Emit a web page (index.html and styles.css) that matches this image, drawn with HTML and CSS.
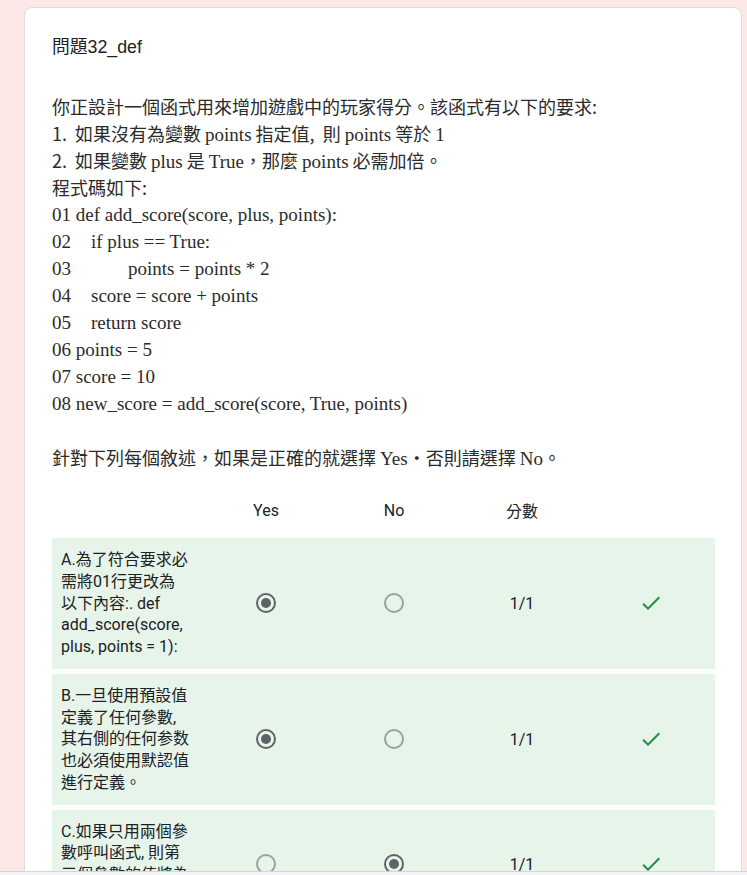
FILE: index.html
```html
<!DOCTYPE html>
<html lang="zh-Hant">
<head>
<meta charset="utf-8">
<title>問題32_def</title>
<link rel="stylesheet" href="styles.css">
</head>
<body>
<div class="page">
  <div class="card">
    <div class="title">問題32_def</div>
    <div class="prompt">
      <div class="pl">你正設計一個函式用來增加遊戲中的玩家得分。該函式有以下的要求:</div>
      <div class="pl">1.&nbsp; 如果沒有為變數 <span class="s">points</span> 指定值,&nbsp; 則 <span class="s">points</span> 等於 <span class="s">1</span></div>
      <div class="pl">2.&nbsp; 如果變數 <span class="s">plus</span> 是 <span class="s">True</span>，那麼 <span class="s">points</span> 必需加倍。</div>
      <div class="pl">程式碼如下:</div>
      <div class="pl s">01 def add_score(score, plus, points):</div>
      <div class="pl s"><span class="ln">02</span><span class="in1">if plus == True:</span></div>
      <div class="pl s"><span class="ln">03</span><span class="in2">points = points * 2</span></div>
      <div class="pl s"><span class="ln">04</span><span class="in1">score = score + points</span></div>
      <div class="pl s"><span class="ln">05</span><span class="in1">return score</span></div>
      <div class="pl s">06 points = 5</div>
      <div class="pl s">07 score = 10</div>
      <div class="pl s">08 new_score = add_score(score, True, points)</div>
      <div class="pl blank"></div>
      <div class="pl">針對下列每個敘述，如果是正確的就選擇 <span class="s">Yes</span>‧否則請選擇 <span class="s">No</span>。</div>
    </div>

    <div class="grid">
      <div class="head">
        <div class="cell"></div>
        <div class="cell">Yes</div>
        <div class="cell">No</div>
        <div class="cell">分數</div>
        <div class="cell"></div>
      </div>

      <div class="row">
        <div class="label">A.為了符合要求必<br>需將01行更改為<br>以下內容:. def<br>add_score(score,<br>plus, points = 1):</div>
        <div class="cell"><span class="radio on"></span></div>
        <div class="cell"><span class="radio"></span></div>
        <div class="cell score">1/1</div>
        <div class="cell"><svg class="check" viewBox="0 0 24 24" width="24" height="24"><path d="M9 16.17L4.83 12l-1.42 1.41L9 19 21 7l-1.41-1.41z" fill="#1e8e3e"/></svg></div>
      </div>

      <div class="row">
        <div class="label">B.一旦使用預設值<br>定義了任何參數,<br>其右側的任何参数<br>也必須使用默認值<br>進行定義。</div>
        <div class="cell"><span class="radio on"></span></div>
        <div class="cell"><span class="radio"></span></div>
        <div class="cell score">1/1</div>
        <div class="cell"><svg class="check" viewBox="0 0 24 24" width="24" height="24"><path d="M9 16.17L4.83 12l-1.42 1.41L9 19 21 7l-1.41-1.41z" fill="#1e8e3e"/></svg></div>
      </div>

      <div class="row">
        <div class="label">C.如果只用兩個參<br>數呼叫函式, 則第<br>三個參數的值將為<br>None。</div>
        <div class="cell"><span class="radio"></span></div>
        <div class="cell"><span class="radio on"></span></div>
        <div class="cell score">1/1</div>
        <div class="cell"><svg class="check" viewBox="0 0 24 24" width="24" height="24"><path d="M9 16.17L4.83 12l-1.42 1.41L9 19 21 7l-1.41-1.41z" fill="#1e8e3e"/></svg></div>
      </div>

      <div class="row">
        <div class="label">D.第03行也會修改<br>在第06行宣告的<br>變數 points 的值。</div>
        <div class="cell"><span class="radio"></span></div>
        <div class="cell"><span class="radio on"></span></div>
        <div class="cell score">1/1</div>
        <div class="cell"><svg class="check" viewBox="0 0 24 24" width="24" height="24"><path d="M9 16.17L4.83 12l-1.42 1.41L9 19 21 7l-1.41-1.41z" fill="#1e8e3e"/></svg></div>
      </div>
    </div>
  </div>
</div>
<div class="bottombar"></div>
</body>
</html>
```

FILE: styles.css
```css
html, body {
  margin: 0;
  padding: 0;
}
body {
  background: #fce8e6;
  font-family: Roboto, "Noto Sans CJK TC", Arial, sans-serif;
  color: #202124;
}
.page {
  padding: 7px 4px 40px 24px;
}
.card {
  width: 718px;
  box-sizing: border-box;
  background: #fff;
  border: 1px solid #dadce0;
  border-radius: 8px;
  padding: 27px 26px 24px 27px;
}
.title {
  font-family: "Liberation Sans", Arial, "Noto Sans CJK TC", sans-serif;
  font-size: 17.8px;
  line-height: 24px;
  color: #202124;
}
.prompt {
  margin-top: 34px;
  font-family: "Noto Sans CJK TC", sans-serif;
  font-size: 18px;
  color: #2b2b2b;
}
.pl {
  height: 27px;
  line-height: 27px;
  white-space: nowrap;
}
.s {
  font-family: "Liberation Serif", "DejaVu Serif", "Noto Sans CJK TC", serif;
  font-size: 19px;
}
.ln {
  display: inline-block;
  width: 39px;
}
.in2 {
  padding-left: 37px;
}
.grid {
  margin-top: 19px;
  display: flex;
  flex-direction: column;
  gap: 5px;
}
.head, .row {
  display: grid;
  grid-template-columns: 150px 128px 128px 128px 130px;
  align-items: center;
}
.head {
  height: 40px;
  font-size: 16px;
  margin-bottom: 3px;
}
.row {
  background: #e6f4ea;
}
.cell {
  text-align: center;
  display: flex;
  justify-content: center;
  align-items: center;
}
.label {
  font-size: 16px;
  line-height: 21.75px;
  padding: 11px 0 11px 9px;
  text-align: left;
  white-space: nowrap;
}
.score {
  font-size: 16px;
}
.radio {
  width: 20px;
  height: 20px;
  box-sizing: border-box;
  border-radius: 50%;
  border: 2px solid #9aa0a6;
  display: flex;
  align-items: center;
  justify-content: center;
}
.radio.on {
  border-color: #5f6368;
}
.radio.on::after {
  content: "";
  width: 10px;
  height: 10px;
  border-radius: 50%;
  background: #5f6368;
}
.check {
  display: block;
}
.bottombar {
  position: fixed;
  left: 0;
  right: 0;
  bottom: 0;
  height: 3px;
  background: #f1f3f4;
  border-top: 1px solid #d6d6d6;
}
```
